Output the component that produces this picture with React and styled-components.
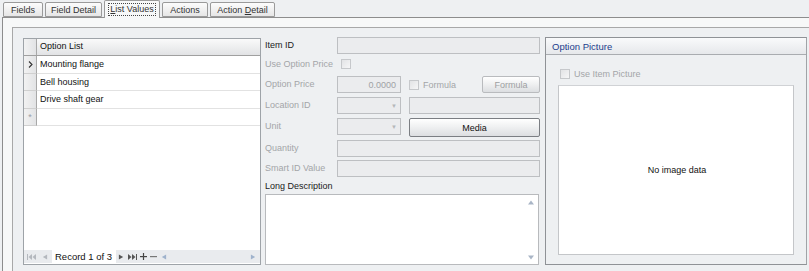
import React from 'react'
import styled, {createGlobalStyle} from 'styled-components'

const Global = createGlobalStyle`
    body{
        margin:0;
        background:#eef0f2;
        font-family:"Liberation Sans", Arial, sans-serif;
        font-size:9px;
        color:#1a1a1a;
        overflow:hidden;
    }
`

const Page = styled.div`
    width:809px;
    height:271px;
    display:flex;
    flex-direction:column;
`

const TabStrip = styled.div`
    display:flex;
    align-items:flex-end;
    gap:2px;
    height:17px;
    padding-left:3px;
`

const Tab = styled.div`
    height:${p => p.$active ? '18px' : '15px'};
    margin-bottom:${p => p.$active ? '-1px' : '0'};
    width:${p => p.$w}px;
    box-sizing:border-box;
    border:1px solid #9a9a9a;
    border-bottom:${p => p.$active ? 'none' : '1px solid #9a9a9a'};
    border-radius:2px 2px 0 0;
    background:${p => p.$active ? '#f7f8f8' : 'linear-gradient(#fcfcfc, #e6e6e6)'};
    display:flex;
    align-items:center;
    justify-content:center;
    white-space:nowrap;
    color:#333;
    position:relative;
    z-index:${p => p.$active ? 2 : 1};
`

const Focus = styled.span`
    outline:1px dotted #444;
    padding:0 1px;
    line-height:11px;
`

const TabPage = styled.div`
    flex:1;
    margin-left:2px;
    border-top:1px solid #8d8d8d;
    border-left:1px solid #8d8d8d;
    background:#f7f8f8;
    padding:9px 0 0 9px;
    display:flex;
`

const Panel = styled.div`
    flex:1;
    border-top:1px solid #a8a8a8;
    border-left:1px solid #a8a8a8;
    background:#eef0f2;
    padding:9px 0 0 10px;
    display:flex;
    align-items:flex-start;
`

const Grid = styled.div`
    width:238px;
    height:227px;
    margin-top:1px;
    box-sizing:border-box;
    border:1px solid #9ea3a8;
    background:#fff;
    display:flex;
    flex-direction:column;
`

const GridRow = styled.div`
    display:flex;
    flex:none;
    height:${p => p.$head ? '16px' : '16.5px'};
    border-bottom:1px solid ${p => p.$head ? '#a0a0a0' : '#e2e2e2'};
    background:${p => p.$head ? 'linear-gradient(#fafafa, #e2e3e5)' : '#fff'};
`

const RowHead = styled.div`
    width:12px;
    flex:none;
    border-right:1px solid #a8a8a8;
    border-bottom:${p => p.$head ? 'none' : '1px solid #d0d0d0'};
    margin-bottom:${p => p.$head ? '0' : '-1px'};
    background:linear-gradient(90deg, #f2f2f2, #e2e3e5);
    display:flex;
    align-items:center;
    justify-content:center;
    color:#9aa0a8;
    font-size:9px;
`

const Cell = styled.div`
    flex:1;
    padding-left:3px;
    padding-bottom:${p => p.$head ? '2px' : '0'};
    display:flex;
    align-items:center;
    color:#111;
`

const GridFill = styled.div`
    flex:1;
`

const NavBar = styled.div`
    height:13px;
    margin-bottom:1px;
    display:flex;
    align-items:center;
    background:#e9ebee;
`

const NavBtn = styled.span`
    width:${p => p.$w || 10}px;
    display:flex;
    align-items:center;
    justify-content:center;
`

const NavText = styled.span`
    background:#fff;
    height:13px;
    display:flex;
    align-items:center;
    padding:0 4px 0 3px;
    font-size:9.5px;
    color:#111;
`

const HScroll = styled.div`
    flex:1;
    display:flex;
    justify-content:space-between;
    align-items:center;
    padding:0 4px 0 3px;
`

const Fields = styled.div`
    width:275px;
    margin-left:4px;
    display:flex;
    flex-direction:column;
`

const Row = styled.div`
    display:flex;
    align-items:${p => p.$top ? 'flex-start' : 'center'};
    height:${p => p.$h || 17}px;
    margin-top:${p => p.$mt || 0}px;
`

const Label = styled.span`
    width:${p => p.$auto ? 'auto' : '72px'};
    flex:none;
    color:${p => p.$dim ? '#a3a5a8' : '#1a1a1a'};
    white-space:nowrap;
    line-height:17px;
`

const Input = styled.div`
    width:${p => p.$w ? p.$w + 'px' : 'auto'};
    flex:${p => p.$w ? 'none' : '1'};
    margin-left:${p => p.$ml || 0}px;
    height:17px;
    box-sizing:border-box;
    border:1px solid #bdbfc2;
    background:#ebecee;
    display:flex;
    align-items:center;
    justify-content:flex-end;
    padding-right:4px;
    color:#a0a2a5;
`

const Arrow = styled.span`
    font-size:6px;
    color:#b5b7ba;
    margin-right:-1px;
`

const Check = styled.span`
    width:10px;
    height:10px;
    flex:none;
    box-sizing:border-box;
    border:1px solid #c6c8cb;
    background:linear-gradient(135deg, #e2e3e5, #f6f6f7);
    margin-left:${p => p.$ml || 0}px;
`

const CheckText = styled.span`
    color:#a3a5a8;
    margin-left:4px;
`

const Button = styled.div`
    width:${p => p.$w}px;
    margin-left:${p => p.$ml || 0}px;
    height:${p => p.$h || 17}px;
    box-sizing:border-box;
    border:1px solid ${p => p.$off ? '#b9bbbe' : '#7b7e83'};
    border-radius:2px;
    background:linear-gradient(#ffffff, #f0f1f2 45%, #dcdee1);
    display:flex;
    align-items:center;
    justify-content:center;
    color:${p => p.$off ? '#9d9fa2' : '#111'};
`

const TextArea = styled.div`
    height:71px;
    margin-top:1px;
    margin-right:1px;
    box-sizing:border-box;
    border:1px solid #b8babd;
    background:#fff;
    display:flex;
    justify-content:flex-end;
`

const VScroll = styled.div`
    width:14px;
    display:flex;
    flex-direction:column;
    justify-content:space-between;
    align-items:center;
    padding:4px 0 3px;
`

const Group = styled.div`
    width:262px;
    height:228px;
    margin-left:5px;
    box-sizing:border-box;
    border:1px solid #8f9296;
    border-right-color:#a0a3a7;
    display:flex;
    flex-direction:column;
`

const GroupHead = styled.div`
    height:16px;
    flex:none;
    border-bottom:1px solid #a9acb0;
    background:linear-gradient(#f9fafb, #e6e8eb);
    display:flex;
    align-items:center;
    padding-left:6px;
    color:#1c3d8c;
    font-size:9.5px;
`

const GroupBody = styled.div`
    flex:1;
    padding:13px 12px 9px 12px;
    display:flex;
    flex-direction:column;
    gap:6px;
`

const CheckRow = styled.div`
    display:flex;
    align-items:center;
    height:11px;
    padding-left:2px;
`

const Picture = styled.div`
    flex:1;
    box-sizing:border-box;
    border:1px solid #c4c6c9;
    border-top-color:#d0d2d5;
    background:#fff;
    display:flex;
    align-items:center;
    justify-content:center;
    color:#111;
    padding-left:2px;
`

const Tri = ({dir, color, size = 6}) => {
    const pts = {
        left: '6,0 6,6 1,3',
        right: '1,0 1,6 6,3',
        up: '0,5 6,5 3,1',
        down: '0,1 6,1 3,5'
    }
    return (
        <svg width={size} height={size} viewBox="0 0 7 6">
            <polygon points={pts[dir]} fill={color} />
        </svg>
    )
}

const items = ['Mounting flange', 'Bell housing', 'Drive shaft gear']

const App = () => {
    return (
        <Page>
            <Global />
            <TabStrip>
                <Tab $w={40}><span>Fields</span></Tab>
                <Tab $w={57}><span>Field Detail</span></Tab>
                <Tab $w={56} $active><Focus><u>L</u>ist Values</Focus></Tab>
                <Tab $w={46}><span>Actions</span></Tab>
                <Tab $w={65}><span>Action <u>D</u>etail</span></Tab>
            </TabStrip>
            <TabPage>
                <Panel>
                    <Grid>
                        <GridRow $head>
                            <RowHead $head />
                            <Cell $head>Option List</Cell>
                        </GridRow>
                        {items.map((it, i) => (
                            <GridRow key={it}>
                                <RowHead>
                                    {i === 0 && (
                                        <svg width="5" height="7" viewBox="0 0 5 7">
                                            <polyline points="1,0.5 4,3.5 1,6.5" fill="none" stroke="#333" strokeWidth="1.1" />
                                        </svg>
                                    )}
                                </RowHead>
                                <Cell>{it}</Cell>
                            </GridRow>
                        ))}
                        <GridRow>
                            <RowHead>*</RowHead>
                            <Cell />
                        </GridRow>
                        <GridFill />
                        <NavBar>
                            <NavBtn $w={14}>
                                <svg width="9" height="6" viewBox="0 0 9 6"><rect x="0" y="0" width="1" height="6" fill="#b4b8be" /><polygon points="5,0 5,6 1.5,3" fill="#b4b8be" /><polygon points="9,0 9,6 5.5,3" fill="#b4b8be" /></svg>
                            </NavBtn>
                            <NavBtn $w={14}><Tri dir="left" color="#b4b8be" /></NavBtn>
                            <NavText>Record 1 of 3</NavText>
                            <NavBtn $w={10}><Tri dir="right" color="#555" /></NavBtn>
                            <NavBtn $w={12}>
                                <svg width="9" height="6" viewBox="0 0 9 6"><polygon points="0,0 0,6 3.5,3" fill="#555" /><polygon points="4,0 4,6 7.5,3" fill="#555" /><rect x="8" y="0" width="1" height="6" fill="#555" /></svg>
                            </NavBtn>
                            <NavBtn $w={10}>
                                <svg width="7" height="7" viewBox="0 0 7 7"><rect x="0" y="3" width="7" height="1.2" fill="#444" /><rect x="2.9" y="0" width="1.2" height="7" fill="#444" /></svg>
                            </NavBtn>
                            <NavBtn $w={10}>
                                <svg width="7" height="7" viewBox="0 0 7 7"><rect x="0" y="3" width="7" height="1.2" fill="#777" /></svg>
                            </NavBtn>
                            <HScroll>
                                <Tri dir="left" color="#9fb2cc" />
                                <Tri dir="right" color="#9fb2cc" />
                            </HScroll>
                        </NavBar>
                    </Grid>

                    <Fields>
                        <Row>
                            <Label>Item ID</Label>
                            <Input />
                        </Row>
                        <Row $mt={3} $h={14}>
                            <Label $dim>Use Option Price</Label>
                            <Check $ml={4} />
                        </Row>
                        <Row $mt={5}>
                            <Label $dim>Option Price</Label>
                            <Input $w={64}>0.0000</Input>
                            <Check $ml={8} />
                            <CheckText>Formula</CheckText>
                            <Button $off $w={58} $ml={26}>Formula</Button>
                        </Row>
                        <Row $mt={4}>
                            <Label $dim>Location ID</Label>
                            <Input $w={64}><Arrow>▼</Arrow></Input>
                            <Input $ml={8} />
                        </Row>
                        <Row $mt={4} $h={19} $top>
                            <Label $dim>Unit</Label>
                            <Input $w={64}><Arrow>▼</Arrow></Input>
                            <Button $w={131} $h={19} $ml={8}>Media</Button>
                        </Row>
                        <Row $mt={3}>
                            <Label $dim>Quantity</Label>
                            <Input />
                        </Row>
                        <Row $mt={3}>
                            <Label $dim>Smart ID Value</Label>
                            <Input />
                        </Row>
                        <Row $mt={3} $h={13}>
                            <Label $auto>Long Description</Label>
                        </Row>
                        <TextArea>
                            <VScroll>
                                <Tri dir="up" color="#a9b5c6" size={7} />
                                <Tri dir="down" color="#a9b5c6" size={7} />
                            </VScroll>
                        </TextArea>
                    </Fields>

                    <Group>
                        <GroupHead>Option Picture</GroupHead>
                        <GroupBody>
                            <CheckRow>
                                <Check />
                                <CheckText>Use Item Picture</CheckText>
                            </CheckRow>
                            <Picture>No image data</Picture>
                        </GroupBody>
                    </Group>
                </Panel>
            </TabPage>
        </Page>
    )
}

export default App
